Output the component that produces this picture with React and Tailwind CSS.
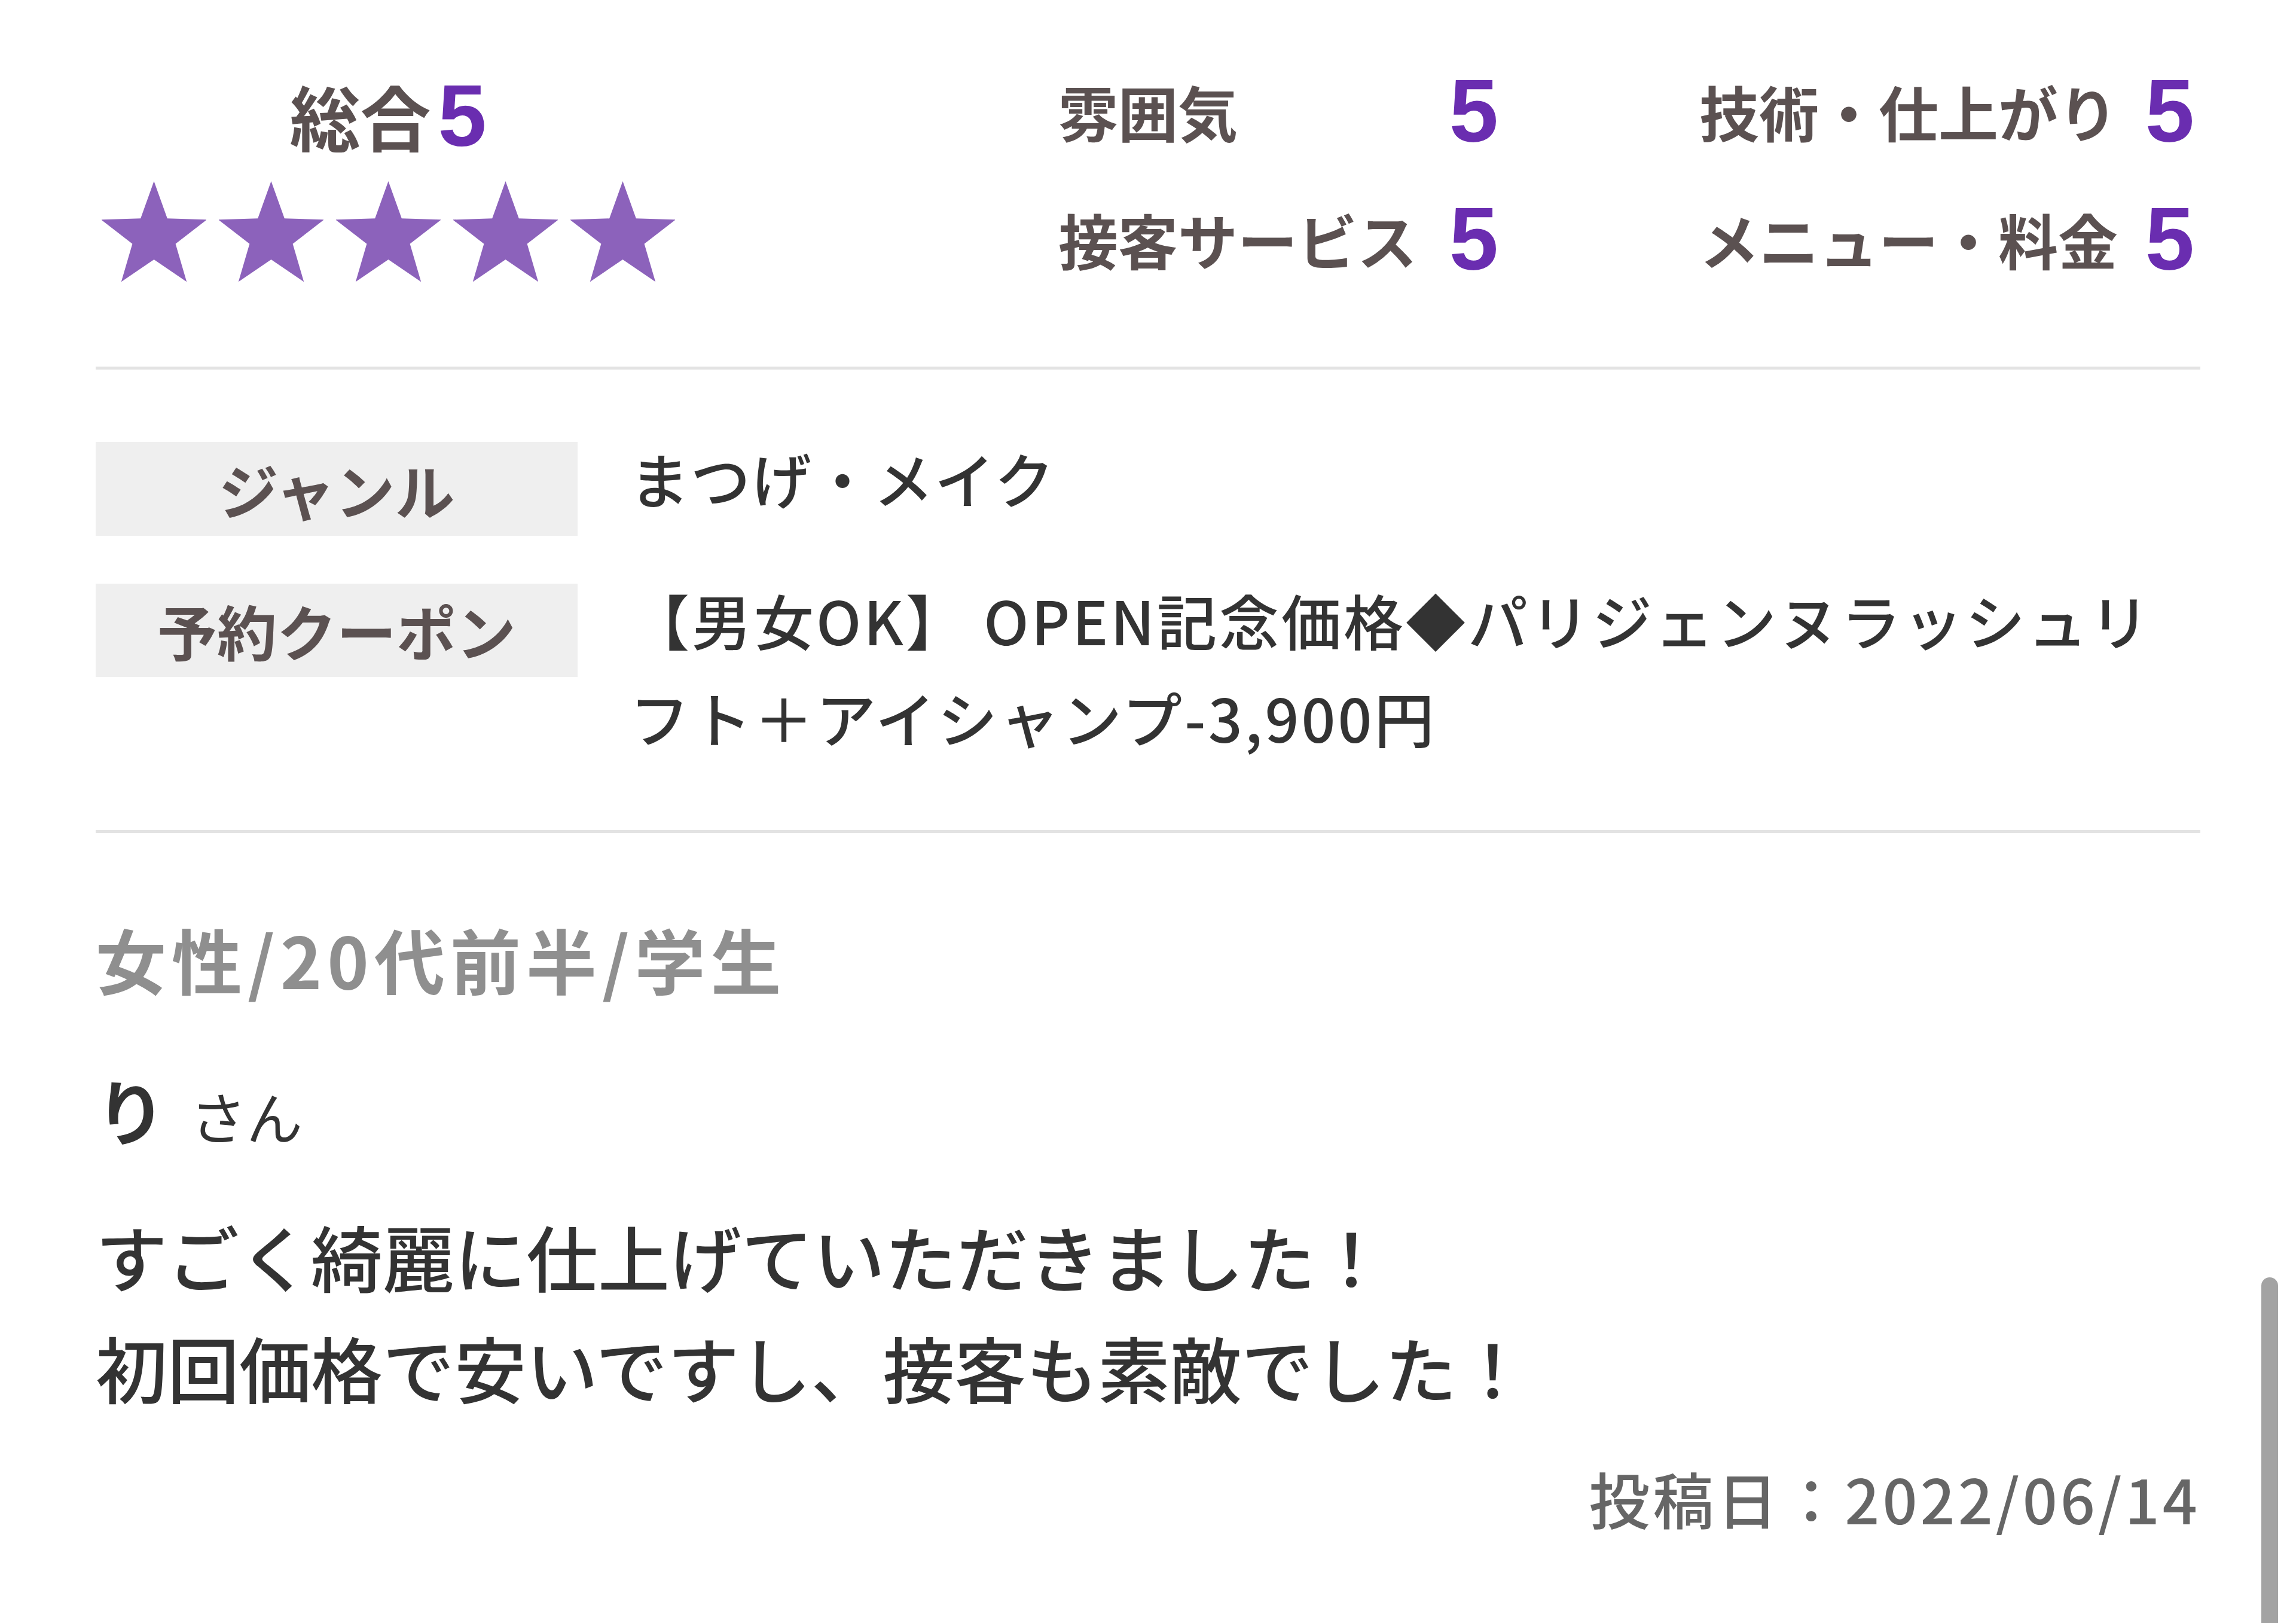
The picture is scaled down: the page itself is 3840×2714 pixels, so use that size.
import React from 'react';

const jp = "font-['Noto_Sans_CJK_JP','Noto_Sans',sans-serif]";

function starPoints(cx, cy, R, r) {
  const pts = [];
  for (let i = 0; i < 10; i++) {
    const a = ((-90 + i * 36) * Math.PI) / 180;
    const rad = i % 2 === 0 ? R : r;
    pts.push(`${(cx + rad * Math.cos(a)).toFixed(1)},${(cy + rad * Math.sin(a)).toFixed(1)}`);
  }
  return pts.join(' ');
}

function Star() {
  return (
    <svg width="175" height="172" viewBox="0 0 175 172" className="block">
      <polygon points={starPoints(87.5, 93, 93, 38)} fill="#8c62bb" />
    </svg>
  );
}

function ScoreRow({ label }) {
  return (
    <div className="flex h-[140px] items-center justify-between">
      <span className="text-[100px] font-bold leading-none text-[#5b5151]">{label}</span>
      <span className="font-['Liberation_Sans',sans-serif] text-[148px] font-bold leading-none text-[#6a2db0]">5</span>
    </div>
  );
}

export default function App() {
  return (
    <div className={`${jp} relative min-h-[2714px] w-full overflow-hidden bg-white`}>
      <div className="px-[160px]">
        {/* scores */}
        <section className="flex items-start border-b-[5px] border-[#e3e3e3] pt-[116px] pb-[138px]">
          <div className="flex w-[978px] flex-col items-center">
            <div className="mt-[7px] flex h-[140px] items-baseline">
              <span className="text-[118px] font-bold leading-[140px] text-[#5b5151]">総合</span>
              <span className="ml-[12px] font-['Liberation_Sans',sans-serif] text-[146px] font-bold leading-[140px] text-[#6a2db0]">5</span>
            </div>
            <div className="mt-[40px] flex gap-[21px]">
              <Star />
              <Star />
              <Star />
              <Star />
              <Star />
            </div>
          </div>
          <div className="mr-[10px] ml-auto flex gap-[336px]">
            <div className="flex w-[736px] flex-col gap-[74px]">
              <ScoreRow label="雰囲気" />
              <ScoreRow label="接客サービス" />
            </div>
            <div className="flex w-[828px] flex-col gap-[74px]">
              <ScoreRow label="技術・仕上がり" />
              <ScoreRow label="メニュー・料金" />
            </div>
          </div>
        </section>

        {/* genre / coupon */}
        <section className="flex flex-col gap-[80px] border-b-[5px] border-[#e3e3e3] pt-[121px] pb-[108px]">
          <div className="flex items-start gap-[87px]">
            <div className="flex h-[157px] w-[806px] shrink-0 items-center justify-center bg-[#efefef] text-[100px] font-semibold text-[#5b5151]">
              ジャンル
            </div>
            <p className="-mt-[22px] text-[100px] font-medium leading-[163px] tracking-[2px] text-[#333333]">まつげ・メイク</p>
          </div>
          <div className="flex items-start gap-[87px]">
            <div className="flex h-[156px] w-[806px] shrink-0 items-center justify-center bg-[#efefef] text-[100px] font-semibold text-[#5b5151]">
              予約クーポン
            </div>
            <p className="-mt-[22px] w-[2560px] text-[100px] font-medium leading-[163px] tracking-[4px] text-[#333333]">
              【男女OK】 OPEN記念価格◆パリジェンヌラッシュリフト＋アイシャンプ-3,900円
            </p>
          </div>
        </section>

        {/* review */}
        <section className="pt-[140px]">
          <p className="text-[118px] font-bold leading-[140px] tracking-[9px] text-[#8f8f8f]">女性/20代前半/学生</p>
          <p className="mt-[112px] flex items-baseline leading-[140px] text-[#333333]">
            <span className="text-[118px] font-bold">り</span>
            <span className="ml-[40px] text-[94px] font-normal">さん</span>
          </p>
          <p className="mt-[72px] text-[120px] font-medium leading-[186px] text-[#333333]">
            すごく綺麗に仕上げていただきました！
            <br />
            初回価格で安いですし、接客も素敵でした！
          </p>
          <p className="mt-[56px] text-right text-[102px] font-medium leading-[140px] tracking-[5px] text-[#666666]">投稿日：2022/06/14</p>
        </section>
      </div>

      <div className="absolute top-[2136px] right-[30px] h-[640px] w-[28px] rounded-full bg-[#a3a3a3]" />
    </div>
  );
}
